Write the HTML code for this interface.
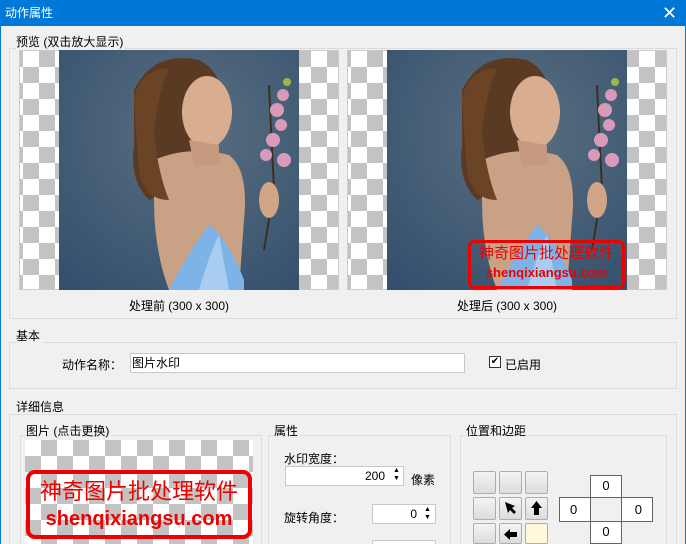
<!DOCTYPE html>
<html><head><meta charset="utf-8"><style>
*{box-sizing:border-box;margin:0;padding:0}
html,body{width:686px;height:544px;overflow:hidden}
body{background:#f0f0f0;font-family:"Liberation Sans","Noto Sans CJK SC",sans-serif;font-size:12px;color:#000;position:relative}
.a{position:absolute}
.title{left:0;top:0;width:686px;height:26px;background:#0078d7;color:#fff;font-size:12px;line-height:26px;padding-left:5px}
.grp{position:absolute;border:1px solid #dcdcdc}
.lbl{position:absolute;background:#f0f0f0;font-size:12px;line-height:14px;padding-right:2px}
.chk{background-color:#fff;background-image:linear-gradient(45deg,#c3c3c3 25%,transparent 25%,transparent 75%,#c3c3c3 75%),linear-gradient(45deg,#c3c3c3 25%,transparent 25%,transparent 75%,#c3c3c3 75%);background-size:32px 32px;background-position:0 0,16px 16px}
.inp{position:absolute;background:#fff;border:1px solid #c8c8c8;font-size:12px}
.btn{position:absolute;width:23px;height:23px;border:1px solid #adadad;border-radius:2px;background:linear-gradient(#f4f4f4,#dcdcdc)}
.cell{position:absolute;background:#fff;border:1px solid #646464;text-align:center;font-size:13px;line-height:20px}
.wm{position:absolute;border:4px solid #e00;border-radius:9px;color:#e00;text-align:center;overflow:hidden;white-space:nowrap}
</style></head><body>
<div class="a" style="left:0;top:0;width:1px;height:544px;background:#0078d7"></div>
<div class="a" style="right:0;top:0;width:1px;height:544px;background:#0078d7"></div>
<div class="a title">动作属性</div>
<div class="a" style="left:662px;top:4px;color:#fff;font-size:18px;line-height:18px;font-weight:300">✕</div>

<div class="grp" style="left:9px;top:48px;width:668px;height:271px"></div>
<div class="lbl" style="left:16px;top:35px">预览 (双击放大显示)</div>

<div class="a chk" style="left:19px;top:50px;width:320px;height:240px;border:1px solid #ccc;background-position:3px 0,19px 16px"></div>
<div class="a chk" style="left:347px;top:50px;width:320px;height:240px;border:1px solid #ccc;background-position:3px 0,19px 16px"></div>

<svg class="a" style="left:59px;top:50px" width="240" height="240" viewBox="0 0 240 240">
<defs><radialGradient id="bg" cx="0.55" cy="0.35" r="0.8"><stop offset="0" stop-color="#5a6f80"/><stop offset="1" stop-color="#34506e"/></radialGradient></defs>
<rect width="240" height="240" fill="url(#bg)"/>
<path d="M75 40 Q95 0 140 10 Q170 25 160 70 L150 110 Q115 140 90 150 Q70 130 75 95 Z" fill="#5a3a22"/>
<path d="M95 110 Q130 95 170 105 Q190 120 185 170 L180 240 L110 240 Q95 200 95 150 Z" fill="#c9a184"/>
<ellipse cx="148" cy="62" rx="25" ry="36" fill="#d8ad90"/>
<path d="M130 90 L160 95 L160 115 L135 115Z" fill="#c59a7e"/>
<path d="M75 50 Q80 20 110 18 Q100 40 95 80 Q98 120 110 150 Q85 150 80 120 Z" fill="#6b4426"/>
<path d="M160 175 L175 170 L180 240 L140 240 Z" fill="#c9a184"/>
<path d="M110 240 Q130 200 150 175 Q170 190 185 230 L185 240 Z" fill="#7eb3e8"/>
<path d="M140 240 Q150 205 160 185 L170 240Z" fill="#a9cdf2"/>
<path d="M210 35 L215 140 L205 200" stroke="#3b3020" stroke-width="2" fill="none"/>
<g fill="#d89ab8"><circle cx="224" cy="45" r="6"/><circle cx="218" cy="60" r="7"/><circle cx="222" cy="75" r="6"/><circle cx="214" cy="90" r="7"/><circle cx="207" cy="105" r="6"/><circle cx="225" cy="110" r="7"/></g>
<circle cx="228" cy="32" r="4" fill="#9cb84a"/>
<ellipse cx="210" cy="150" rx="10" ry="18" fill="#d2a486"/>
</svg>
<svg class="a" style="left:387px;top:50px" width="240" height="240" viewBox="0 0 240 240">
<rect width="240" height="240" fill="url(#bg)"/>
<path d="M75 40 Q95 0 140 10 Q170 25 160 70 L150 110 Q115 140 90 150 Q70 130 75 95 Z" fill="#5a3a22"/>
<path d="M95 110 Q130 95 170 105 Q190 120 185 170 L180 240 L110 240 Q95 200 95 150 Z" fill="#c9a184"/>
<ellipse cx="148" cy="62" rx="25" ry="36" fill="#d8ad90"/>
<path d="M130 90 L160 95 L160 115 L135 115Z" fill="#c59a7e"/>
<path d="M75 50 Q80 20 110 18 Q100 40 95 80 Q98 120 110 150 Q85 150 80 120 Z" fill="#6b4426"/>
<path d="M160 175 L175 170 L180 240 L140 240 Z" fill="#c9a184"/>
<path d="M110 240 Q130 200 150 175 Q170 190 185 230 L185 240 Z" fill="#7eb3e8"/>
<path d="M140 240 Q150 205 160 185 L170 240Z" fill="#a9cdf2"/>
<path d="M210 35 L215 140 L205 200" stroke="#3b3020" stroke-width="2" fill="none"/>
<g fill="#d89ab8"><circle cx="224" cy="45" r="6"/><circle cx="218" cy="60" r="7"/><circle cx="222" cy="75" r="6"/><circle cx="214" cy="90" r="7"/><circle cx="207" cy="105" r="6"/><circle cx="225" cy="110" r="7"/></g>
<circle cx="228" cy="32" r="4" fill="#9cb84a"/>
<ellipse cx="210" cy="150" rx="10" ry="18" fill="#d2a486"/>
</svg>
<div class="wm" style="left:468px;top:240px;width:157px;height:49px;border-width:3px;border-radius:6px">
<div style="font-size:15px;line-height:20px;margin-top:1px">神奇图片批处理软件</div>
<div style="font-size:13px;line-height:18px;font-weight:bold">shenqixiangsu.com</div></div>

<div class="a" style="left:19px;top:297px;width:320px;text-align:center">处理前 (300 x 300)</div>
<div class="a" style="left:347px;top:297px;width:320px;text-align:center">处理后 (300 x 300)</div>

<div class="grp" style="left:9px;top:342px;width:668px;height:47px"></div>
<div class="lbl" style="left:16px;top:329px">基本</div>
<div class="a" style="left:62px;top:356px">动作名称：</div>
<div class="inp" style="left:130px;top:353px;width:335px;height:20px;padding:2px 1px;line-height:14px">图片水印</div>
<div class="a" style="left:489px;top:356px;width:12px;height:12px;border:1px solid #333;background:#fff;font-size:10px;line-height:10px;text-align:center">✔</div>
<div class="a" style="left:505px;top:356px">已启用</div>

<div class="grp" style="left:9px;top:414px;width:668px;height:140px"></div>
<div class="lbl" style="left:16px;top:400px">详细信息</div>

<div class="grp" style="left:20px;top:435px;width:242px;height:120px"></div>
<div class="lbl" style="left:26px;top:424px">图片 (点击更换)</div>
<div class="a chk" style="left:25px;top:440px;width:228px;height:104px;background-position:0 0,16px 16px"></div>
<div class="wm" style="left:26px;top:470px;width:226px;height:69px">
<div style="font-size:22px;line-height:30px;margin-top:3px">神奇图片批处理软件</div>
<div style="font-size:20px;line-height:24px;font-weight:bold">shenqixiangsu.com</div></div>

<div class="grp" style="left:268px;top:435px;width:183px;height:120px"></div>
<div class="lbl" style="left:274px;top:424px">属性</div>
<div class="a" style="left:284px;top:450px">水印宽度：</div>
<div class="inp" style="left:285px;top:466px;width:119px;height:20px;text-align:right;padding-right:18px;line-height:18px">200</div>
<div class="a" style="left:393px;top:467px;font-size:7px;line-height:8px">▲<br>▼</div>
<div class="a" style="left:411px;top:471px">像素</div>
<div class="a" style="left:284px;top:509px">旋转角度：</div>
<div class="inp" style="left:372px;top:504px;width:64px;height:20px;text-align:right;padding-right:18px;line-height:18px">0</div>
<div class="a" style="left:424px;top:506px;font-size:7px;line-height:8px">▲<br>▼</div>
<div class="inp" style="left:372px;top:540px;width:64px;height:4px;border-bottom:none"></div>

<div class="grp" style="left:460px;top:435px;width:207px;height:120px"></div>
<div class="lbl" style="left:466px;top:424px">位置和边距</div>
<div class="btn" style="left:473px;top:471px"></div>
<div class="btn" style="left:499px;top:471px"></div>
<div class="btn" style="left:525px;top:471px"></div>
<div class="btn" style="left:473px;top:497px"></div>
<div class="btn" style="left:499px;top:497px"><svg width="21" height="21"><path d="M5 4 L15 8 L12 10 L16 14 L14 16 L10 12 L8 15 Z" fill="#000"/></svg></div>
<div class="btn" style="left:525px;top:497px"><svg width="21" height="21"><path d="M10.5 3 L16 10 L13 10 L13 17 L8 17 L8 10 L5 10 Z" fill="#000"/></svg></div>
<div class="btn" style="left:473px;top:523px;height:21px"></div>
<div class="btn" style="left:499px;top:523px;height:21px"><svg width="21" height="21"><path d="M4 10.5 L10 5 L10 8 L17 8 L17 13 L10 13 L10 16 Z" fill="#000"/></svg></div>
<div class="btn" style="left:525px;top:523px;height:21px;background:#fff8dc"></div>
<div class="cell" style="left:590px;top:475px;width:32px;height:23px">0</div>
<div class="cell" style="left:559px;top:497px;width:94px;height:25px;line-height:23px"><span style="position:absolute;left:10px">0</span><span style="position:absolute;right:10px">0</span></div>
<div class="a" style="left:590px;top:498px;width:32px;height:23px;background:#f0f0f0;border-left:1px solid #646464;border-right:1px solid #646464"></div>
<div class="cell" style="left:590px;top:521px;width:32px;height:23px">0</div>
</body></html>
